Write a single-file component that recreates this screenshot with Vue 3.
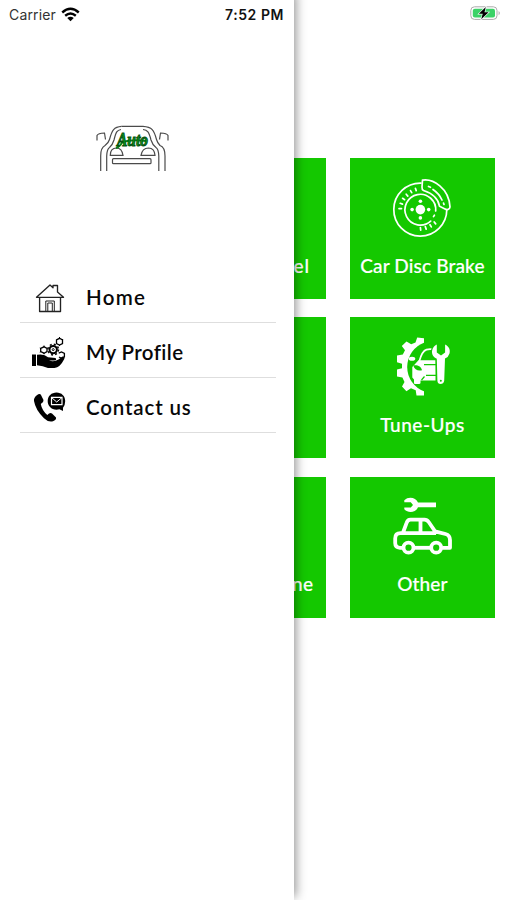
<!-- src/App.vue -->
<template>
  <div class="screen">
    <main class="services">
      <div v-for="tile in tiles" :key="tile.label" class="tile">
        <svg v-if="tile.icon === 'disc'" class="tile-icon" viewBox="0 0 75 75" fill="none" stroke="#fff" stroke-width="1.7" stroke-linecap="round">
          <path d="M36 13.1A26.5 26.5 0 1 0 61.8 39.5" />
          <path d="M45.7 51.1A15.4 15.4 0 1 1 50.7 41" />
          <path fill="#14c800" d="M37.5 10.2C48 8.5 64 18 65 37C64.8 39.6 62 40.3 59.5 38.7L54.5 36.2C53.3 29 48 23.5 38.5 20.5Q36.8 19.5 37 17Z" />
          <path d="M43.5 16.5L45.5 17.3M48 19.5Q54 23.5 57 30M58.5 33L59 34.5M49.4 45.2L48.5 46.6" />
          <path d="M14 38.6h2.5M15.2 33.3l2.3.8M17.6 28.3l2 1.4M21.2 24.2l1.6 1.9M25.5 20.6l1.2 2.1M30.4 18.3l.8 2.3M35.4 57.6l.3 2.6M40.3 56.6l.9 2.5M45 54.7l1.3 2.2M49.2 52l1.5 1.9" />
          <g fill="#fff" stroke="none">
            <circle cx="35.4" cy="39.6" r="4.8" />
            <circle cx="35.4" cy="31.3" r="1.8" />
            <circle cx="35.4" cy="47.9" r="1.8" />
            <circle cx="27.1" cy="39.6" r="1.8" />
            <circle cx="43.7" cy="39.6" r="1.8" />
          </g>
        </svg>

        <svg v-else-if="tile.icon === 'tune'" class="tile-icon tune" viewBox="0 0 75 75" fill="#fff">
          <path d="M39 8.3V13.5L39 60.7V65.5H31.5L30.7 60.3L26 58.3L21.4 61.2L17 56.4L19.5 52L17.4 47.4L12 46.4V39.5L17 38.2V33.7L12 32.3V25.4L17.8 24.5L20 20.3L16.8 16L21.5 11.6L26.2 14.2L30.5 12.6L32.2 7.6Z" />
          <path fill="#14c800" d="M39.5 12.5A26 26 0 0 0 39.5 61.5Z" />
          <path d="M34.2 31.5Q37 21 41.5 19.6Q46 18.6 50 20" fill="none" stroke="#fff" stroke-width="1.7" />
          <path d="M33.5 30.3H50.5V50.5H35.5V53Q35.3 54 34 54H30Q29 54 29 53V49.5L27.3 47.5V37Z" />
          <path d="M39 34.6H51M41 45.3H51M36.5 50L39.5 46.5" fill="none" stroke="#14c800" stroke-width="1.2" />
          <path fill="#14c800" d="M28.3 35.5C32 34.5 36.5 36.7 37 40.2C32.8 41.3 29.5 39.5 28.3 35.5Z" />
          <ellipse cx="27" cy="28.8" rx="3.3" ry="2" />
          <path stroke="#14c800" stroke-width="2.4" paint-order="stroke" d="M51.8 14.6V22.6L56 25.6L60.1 22.6V14.6C64 16.4 65.5 20 64.5 23.6Q63.5 27.2 60 28.6L59.2 50.8Q58.5 54 55.5 54Q52.7 54 52.4 50.8L51.8 28.7C48 26.9 46.4 23.7 47.2 20.2Q48.2 16.1 51.8 14.6Z" />
          <circle cx="55.8" cy="50.7" r="1" fill="#14c800" />
        </svg>

        <svg v-else-if="tile.icon === 'car'" class="tile-icon car" viewBox="0 0 75 75" fill="none" stroke="#fff" stroke-width="3.8" stroke-linejoin="round">
          <path d="M17.5 44L21.7 32.7Q22.7 29.6 25.5 29.6H39.5Q42 29.6 43.7 32L50 41.3L60.5 44Q65 45.2 65 50V57.8H57.3M16.5 43.2H51M35.5 30V43M18 57.8H15Q10.2 57.5 10.2 53V48.5Q10.2 43.2 15.5 43.2H18" />
          <path d="M28.7 57.8H45.3" />
          <circle cx="23.5" cy="57.7" r="5" />
          <circle cx="51.2" cy="57.7" r="5" />
          <path fill="#fff" stroke="none" d="M19.3 10.3C23.5 6 31 7.5 33 12.6H51V17.3H33C31 22.3 23.5 23.8 19.3 19.3V17.6H25.8L28 15L25.8 12.2H19.3Z" />
        </svg>
        <span class="tile-label" :class="tile.icon">{{ tile.label }}</span>
      </div>
    </main>

    <svg class="battery" viewBox="0 0 31 15">
      <rect x=".8" y=".8" width="26.2" height="12.6" rx="3.7" fill="#fff" stroke="#acacac" />
      <path d="M28.6 5Q31 7.1 28.6 9.2Z" fill="#acacac" />
      <rect x="2.8" y="2.7" width="22.2" height="8.8" rx="2" fill="#3bd267" />
      <path d="M15.8 1L8.8 7.8H12.7L11.2 13.3L18.6 6.3H14.5Z" fill="#000" stroke="#fff" stroke-width="1.2" paint-order="stroke" />
    </svg>

    <aside class="drawer">
      <header class="status">
        <span class="carrier">Carrier</span>
        <svg class="wifi" viewBox="0 0 20 15" fill="none" stroke="#000" stroke-width="2.5">
          <path d="M1.3 5.4Q10 -2.3 18.7 5.4M4.4 8.8Q10 4 15.6 8.8" />
          <path d="M6.6 11.1Q10 8.4 13.4 11.1L10 14.5Z" fill="#000" stroke="none" />
        </svg>
        <span class="time">7:52 PM</span>
      </header>

      <svg class="logo" viewBox="0 0 95 65" fill="none" stroke="#4b4b4b" stroke-width="1.2">
        <path d="M36.5 11.4H58C67 12 69 15 71.5 24.5Q72.5 28 75 30.5Q80 32 80 41V56" />
        <path d="M36.5 11.4C29 12 27 15 24.5 24.5Q23.5 28 20 30.5Q15.5 33 15.7 41V56" />
        <path d="M36 14.5C32 15 31 17 29 25Q27.5 30 24.5 32.5Q22 34 21.7 41V56M58 14.5C62.5 15 64 17 66 25Q67.5 30 71 32.5Q73.5 34 73.8 41V56" />
        <path d="M12 25.5V20.5Q13 18.3 19.5 18L20.5 24.5M83 25.5V20.5Q82 18.3 75.5 18L74.5 24.5" />
        <path d="M25.3 40.3Q25.3 33 31.5 33Q37 33.2 38 40.3ZM56 40.3Q57.2 33.2 63.5 33Q69.5 33.2 70 40.3Z" />
        <rect x="27.5" y="43.7" width="38.5" height="5" rx="1" />
        <path d="M31 33Q34.5 32 37.5 27M36 27.5Q47 24 61 26" class="logo-stroke" />
        <text x="32" y="31" class="logo-text" textLength="31" lengthAdjust="spacingAndGlyphs">Auto</text>
      </svg>

      <nav class="menu">
        <a v-for="item in menu" :key="item.label" class="menu-item">
          <svg v-if="item.icon === 'home'" class="menu-icon" viewBox="0 0 36 36" fill="none" stroke="#222" stroke-width="1.35" stroke-linejoin="round">
            <path d="M4.5 18.3L18 6L21 8.7V6.5H25.5V13L31.5 18.3ZM7.6 18.5V32.5H28.5V18.5" />
            <path d="M13.8 32V22H22.3V32M15.8 32V24H20.3V32" stroke-width="1" />
          </svg>
          <svg v-else-if="item.icon === 'profile'" class="menu-icon" viewBox="0 0 36 36" fill="#000">
            <path d="M0 20.5H4V32H0ZM5 20.8Q12 19.3 16 23.3L23.5 24Q25.3 26 22 26.5H17Q22 28.3 26.5 25.5L30.5 22.5Q33.5 22.5 32 25.5Q28 33.5 22.5 34H16Q11 32 5 31.2Z" />
            <g fill="none" stroke="#000">
              <circle cx="21.2" cy="15.6" r="3.7" stroke-width="2" />
              <circle cx="21.2" cy="15.6" r="5.3" stroke-width="1.5" stroke-dasharray="2 2.16" />
              <circle cx="21.2" cy="15.6" r="1" />
              <path d="M24.5 5.8L27.5 4.3L30.5 6V9.5L27.5 11L24.5 9.5ZM8.7 14.3L12 12.8L15 14.5V17.5L12 19.2L8.7 17.7ZM26.7 19.2L29.5 18L32.4 19.5V22.8L29.5 24.3L27 23" stroke-width="1.3" />
              <path d="M27.5 3V4.5M27.5 11V12M31 5L30.2 6M24 10L24.7 9.3M12 11.5V13M7.8 14L9 14.7M7.8 18.2L9 17.5M12 19V20.3" />
            </g>
          </svg>
          <svg v-else class="menu-icon" viewBox="0 0 36 36" fill="#000">
            <path d="M4.5 6.5Q8 4 9 6L11.5 11Q12 13 8.8 15Q10 21.5 15.3 26Q18 23 20 24.5L24 28.4Q24.5 30.5 21.5 32Q17 34 12 29.2Q3.5 21 2 12Q1.5 9 4.5 6.5Z" />
            <path d="M24.5 3.5C29.5 3.5 33.2 7 33.2 12Q33.2 16.3 31 18.7V22L27.5 20.3C20.5 22 15.5 17.5 15.7 12C15.8 7 19.5 3.5 24.5 3.5Z" />
            <path d="M19.5 8.3H30V15.7H19.5Z" fill="none" stroke="#fff" stroke-width="1.2" />
            <path d="M19.5 8.5L24.7 13L30 8.5" fill="none" stroke="#fff" />
          </svg>
          <span class="menu-label" :class="item.icon">{{ item.label }}</span>
        </a>
      </nav>
    </aside>
  </div>
</template>

<script setup>
const menu = [
  { label: 'Home', icon: 'home' },
  { label: 'My Profile', icon: 'profile' },
  { label: 'Contact us', icon: 'contact' }
]

const tiles = [
  { label: 'Alloy Wheel', icon: 'wheel' },
  { label: 'Car Disc Brake', icon: 'disc' },
  { label: 'Battery', icon: 'battery-tile' },
  { label: 'Tune-Ups', icon: 'tune' },
  { label: 'Check Engine', icon: 'engine' },
  { label: 'Other', icon: 'car' }
]
</script>

<style>
body {
  margin: 0;
  background: #fff;
}
</style>

<style scoped>
.screen {
  position: relative;
  height: 900px;
  overflow: hidden;
  background: #fff;
  font-family: Lato, "Open Sans", sans-serif;
}

.services {
  display: grid;
  grid-template-columns: 144.3px 144.3px;
  grid-auto-rows: 141px;
  gap: 18.2px 24.3px;
  justify-content: end;
  padding: 158.3px 12.4px 0 0;
}

.tile {
  display: flex;
  flex-direction: column;
  align-items: center;
  justify-content: flex-end;
  background: #14c800;
  color: #fff;
}

.tile-icon {
  width: 75px;
  height: 75px;
}

.tile-icon.tune {
  margin-bottom: -1px;
}

.tile-icon.car {
  margin-bottom: -1.5px;
}

.tile-label {
  height: 24px;
  margin: 9px 0 21.5px;
  font-size: 19px;
  line-height: 24px;
  font-weight: 500;
  letter-spacing: 0.15px;
  white-space: nowrap;
  -webkit-text-stroke: 0.2px #fff;
}

.tile-label.tune {
  letter-spacing: 0.5px;
}

.tile-label.wheel {
  letter-spacing: 1px;
}

.tile-label.engine {
  letter-spacing: 0.5px;
}

.battery {
  position: absolute;
  left: 470px;
  top: 6px;
  width: 31px;
  height: 15px;
}

.drawer {
  position: absolute;
  left: 0;
  top: 0;
  width: 294px;
  height: 900px;
  background: #fff;
  box-shadow: 0 -5px 10px 2px rgba(0, 0, 0, 0.42);
}

.status {
  display: flex;
  align-items: center;
  height: 28px;
  padding: 0 10.5px 0 9px;
  font-family: Inter, sans-serif;
  font-size: 14px;
  color: #111;
}

.carrier {
  color: #333;
  letter-spacing: 0.15px;
}

.wifi {
  width: 19px;
  height: 15px;
  margin-left: 5px;
}

.time {
  margin-left: auto;
  font-weight: 600;
  letter-spacing: 0.55px;
  margin-right: -0.5px;
}

.logo {
  display: block;
  width: 95px;
  height: 65px;
  margin: 87px 0 0 85px;
}

.logo-text {
  fill: #07951b;
  stroke: #06500e;
  stroke-width: 1px;
  font: italic bold 19px "Liberation Serif", serif;
}

.logo-stroke {
  stroke: #078018;
  stroke-width: 2px;
}

.menu {
  margin: 87.5px 18px 0 20px;
}

.menu-item {
  display: flex;
  align-items: center;
  height: 54px;
  border-bottom: 1px solid #dedede;
}

.menu-icon {
  width: 36px;
  height: 36px;
  margin: 5px 0 0 11.5px;
}

.menu-label {
  margin: 5px 0 0 18.5px;
  font-size: 20.5px;
  font-weight: 600;
  color: #080808;
}

.menu-label.home {
  letter-spacing: 1.3px;
}

.menu-label.profile {
  letter-spacing: 0.4px;
}

.menu-label.contact {
  letter-spacing: 0.85px;
}
</style>
